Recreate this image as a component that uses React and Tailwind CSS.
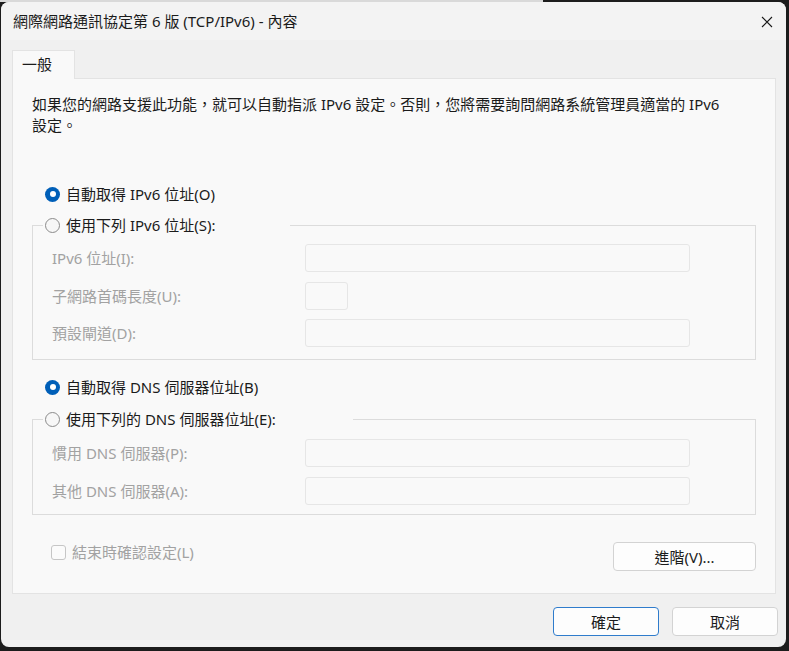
import React from "react";

const FONT = { fontFamily: '"Noto Sans", "Noto Sans CJK TC", sans-serif' };

function Radio({ checked }) {
  return checked ? (
    <span className="w-[15px] h-[15px] rounded-full bg-[#005fb8] flex items-center justify-center shrink-0">
      <span className="w-[6px] h-[6px] rounded-full bg-white" />
    </span>
  ) : (
    <span className="w-[15px] h-[15px] rounded-full border border-[#8b8b8b] bg-[#f7f7f7] shrink-0" />
  );
}

function RadioRow({ checked, label }) {
  return (
    <div className="flex items-center h-[20px] pl-[13px] gap-[6px] text-[15px] leading-[20px] text-[#1b1b1b] whitespace-nowrap">
      <Radio checked={checked} />
      <span>{label}</span>
    </div>
  );
}

function FieldRow({ label, inputW, mt }) {
  return (
    <div className={`flex items-center h-[28px] pl-[19px] ${mt}`}>
      <div className="w-[253px] text-[15px] leading-[20px] text-[#a2a2a2] whitespace-nowrap">{label}</div>
      <div className={`${inputW} h-[28px] rounded-[3px] border border-[#e6e6e6] bg-[#f9f9f9]`} />
    </div>
  );
}

export default function App() {
  return (
    <div className="w-[789px] h-[651px] bg-[#1c1c1c] overflow-hidden" style={FONT}>
      <div className="flex h-[2px]">
        <div className="w-[543px] bg-[#d9d9d9]" />
        <div className="flex-1 bg-[#1c1c1c]" />
      </div>
      <div className="ml-[1px] w-[785px] h-[645px] rounded-[8px] bg-[#f0f0f0] flex flex-col overflow-hidden">
        {/* title bar */}
        <div className="h-[38px] bg-[#f3f3f3] flex items-center justify-between pl-[12px] pb-[1px]">
          <span className="text-[15px] leading-[20px] text-[#1b1b1b] whitespace-nowrap">網際網路通訊協定第 6 版 (TCP/IPv6) - 內容</span>
          <span className="w-[20px] h-[20px] mr-[9px] mt-[2px] flex items-center justify-center">
            <svg width="12" height="12" viewBox="0 0 12 12">
              <path d="M1 1 L11 11 M11 1 L1 11" stroke="#1b1b1b" strokeWidth="1.1" fill="none" />
            </svg>
          </span>
        </div>

        {/* tab */}
        <div className="mt-[10px] ml-[11px] w-[63px] h-[29px] -mb-[1px] relative z-10 border border-b-0 border-[#e3e3e3] bg-[#f9f9f9] pl-[9px] pt-[3px] text-[15px] leading-[20px] text-[#1b1b1b]">
          一般
        </div>

        {/* panel */}
        <div className="ml-[11px] w-[764px] h-[516px] border border-[#e3e3e3] bg-[#f9f9f9] pl-[19px] pr-[19px] pt-[15px] flex flex-col">
          <p className="text-[15px] leading-[21px] text-[#1b1b1b] whitespace-nowrap">
            如果您的網路支援此功能，就可以自動指派 IPv6 設定。否則，您將需要詢問網路系統管理員適當的 IPv6
            <br />
            設定。
          </p>

          <div className="mt-[48px]">
            <RadioRow checked label="自動取得 IPv6 位址(O)" />
          </div>

          <fieldset className="mt-[11px] border border-[#dcdcdc] pb-[12px]">
            <legend className="ml-[10px] w-[247px]">
              <div className="-ml-[11px]">
                <RadioRow label="使用下列 IPv6 位址(S):" />
              </div>
            </legend>
            <FieldRow label="IPv6 位址(I):" inputW="w-[385px]" mt="mt-[9px]" />
            <FieldRow label="子網路首碼長度(U):" inputW="w-[43px]" mt="mt-[10px]" />
            <FieldRow label="預設閘道(D):" inputW="w-[385px]" mt="mt-[9px]" />
          </fieldset>

          <div className="mt-[17px]">
            <RadioRow checked label="自動取得 DNS 伺服器位址(B)" />
          </div>

          <fieldset className="mt-[12px] border border-[#dcdcdc] pb-[9px]">
            <legend className="ml-[10px] w-[310px]">
              <div className="-ml-[11px]">
                <RadioRow label="使用下列的 DNS 伺服器位址(E):" />
              </div>
            </legend>
            <FieldRow label="慣用 DNS 伺服器(P):" inputW="w-[385px]" mt="mt-[10px]" />
            <FieldRow label="其他 DNS 伺服器(A):" inputW="w-[385px]" mt="mt-[10px]" />
          </fieldset>

          <div className="mt-[27px] flex items-start justify-between">
            <div className="flex items-center h-[20px] pl-[19px] gap-[6px]">
              <span className="w-[15px] h-[15px] rounded-[3px] border border-[#c6c6c6] bg-[#fbfbfb]" />
              <span className="text-[15px] leading-[20px] text-[#a2a2a2] whitespace-nowrap">結束時確認設定(L)</span>
            </div>
            <div className="w-[143px] h-[29px] rounded-[4px] border border-[#d3d3d3] bg-[#fdfdfd] flex items-center justify-center text-[15px] leading-[20px] text-[#1b1b1b]">
              進階(V)...
            </div>
          </div>
        </div>

        {/* footer */}
        <div className="flex justify-end gap-[13px] pr-[8px] pt-[13px]">
          <div className="w-[106px] h-[29px] rounded-[4px] border border-[#2f7ccc] bg-[#fdfdfd] flex items-center justify-center text-[15px] leading-[20px] text-[#1b1b1b]">
            確定
          </div>
          <div className="w-[106px] h-[29px] rounded-[4px] border border-[#d3d3d3] bg-[#fdfdfd] flex items-center justify-center text-[15px] leading-[20px] text-[#1b1b1b]">
            取消
          </div>
        </div>
      </div>
    </div>
  );
}
